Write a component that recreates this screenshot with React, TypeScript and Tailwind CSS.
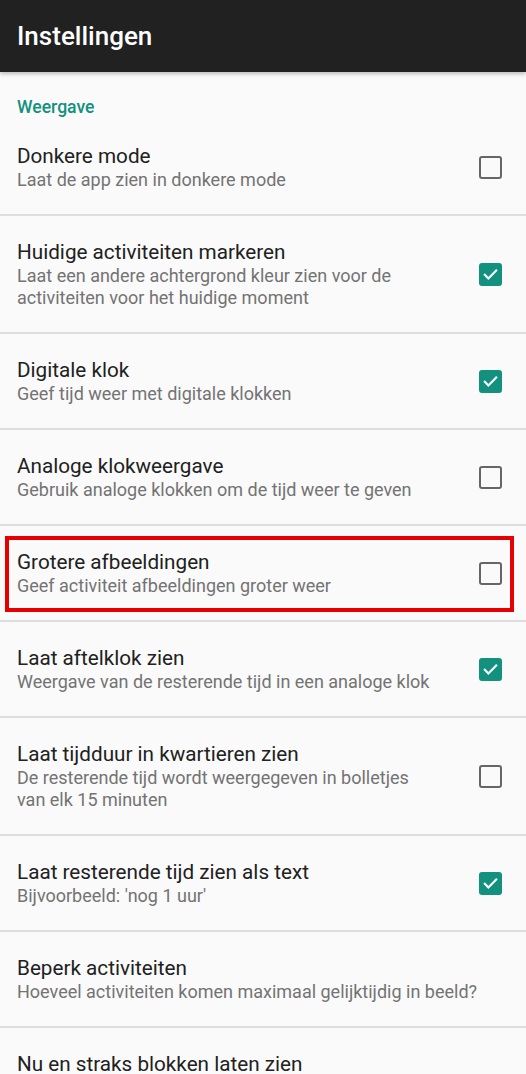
import React from 'react';

type Pref = {
  title: string;
  summary: string;
  checked?: boolean;
  highlight?: boolean;
};

const prefs: Pref[] = [
  { title: 'Donkere mode', summary: 'Laat de app zien in donkere mode', checked: false },
  {
    title: 'Huidige activiteiten markeren',
    summary: 'Laat een andere achtergrond kleur zien voor de activiteiten voor het huidige moment',
    checked: true,
  },
  { title: 'Digitale klok', summary: 'Geef tijd weer met digitale klokken', checked: true },
  { title: 'Analoge klokweergave', summary: 'Gebruik analoge klokken om de tijd weer te geven', checked: false },
  { title: 'Grotere afbeeldingen', summary: 'Geef activiteit afbeeldingen groter weer', checked: false, highlight: true },
  { title: 'Laat aftelklok zien', summary: 'Weergave van de resterende tijd in een analoge klok', checked: true },
  {
    title: 'Laat tijdduur in kwartieren zien',
    summary: 'De resterende tijd wordt weergegeven in bolletjes van elk 15 minuten',
    checked: false,
  },
  { title: 'Laat resterende tijd zien als text', summary: "Bijvoorbeeld: 'nog 1 uur'", checked: true },
  { title: 'Beperk activiteiten', summary: 'Hoeveel activiteiten komen maximaal gelijktijdig in beeld?' },
  { title: 'Nu en straks blokken laten zien', summary: '' },
];

const Checkbox = ({ checked }: { checked: boolean }) =>
  checked ? (
    <div className="w-[23px] h-[23px] rounded-[3px] bg-[#13917f] flex items-center justify-center">
      <svg width="17" height="17" viewBox="0 0 24 24" fill="none">
        <path d="M4 12.5l5 5L20 6.5" stroke="white" strokeWidth="3" strokeLinecap="square" />
      </svg>
    </div>
  ) : (
    <div className="w-[23px] h-[23px] rounded-[3px] border-[2.5px] border-[#666666]" />
  );

const PrefRow = ({ pref }: { pref: Pref }) => {
  const hasBox = pref.checked !== undefined;
  return (
    <div className="relative flex items-center border-b-2 border-[#dedede] pl-[17px] pr-[24px] py-[23px]">
      <div className={hasBox ? 'flex-1 pr-[46px]' : 'flex-1'}>
        <div className="text-[20.7px] leading-[26px] text-[#212121]">{pref.title}</div>
        {pref.summary && <div className="text-[18px] leading-[22px] text-[#737373]">{pref.summary}</div>}
      </div>
      {hasBox && <Checkbox checked={!!pref.checked} />}
      {pref.highlight && (
        <div className="absolute left-[5px] right-[12px] top-[10px] bottom-[8px] border-[4px] border-[#e60000] pointer-events-none" />
      )}
    </div>
  );
};

export default function App() {
  return (
    <div className="w-[526px] h-[1074px] overflow-hidden bg-[#fafafa]" style={{ fontFamily: 'Roboto, "Noto Sans", sans-serif' }}>
      <div className="h-[72px] bg-[#212121] flex items-center pl-[17px] shadow-[0_2px_4px_rgba(0,0,0,0.25)] relative z-10">
        <h1 className="text-white text-[26px] font-medium">Instellingen</h1>
      </div>
      <div className="pl-[17px] pt-[24px] pb-[2px] text-[17.6px] leading-[22px] font-medium text-[#13917f]">Weergave</div>
      {prefs.map((p) => (
        <PrefRow key={p.title} pref={p} />
      ))}
    </div>
  );
}
